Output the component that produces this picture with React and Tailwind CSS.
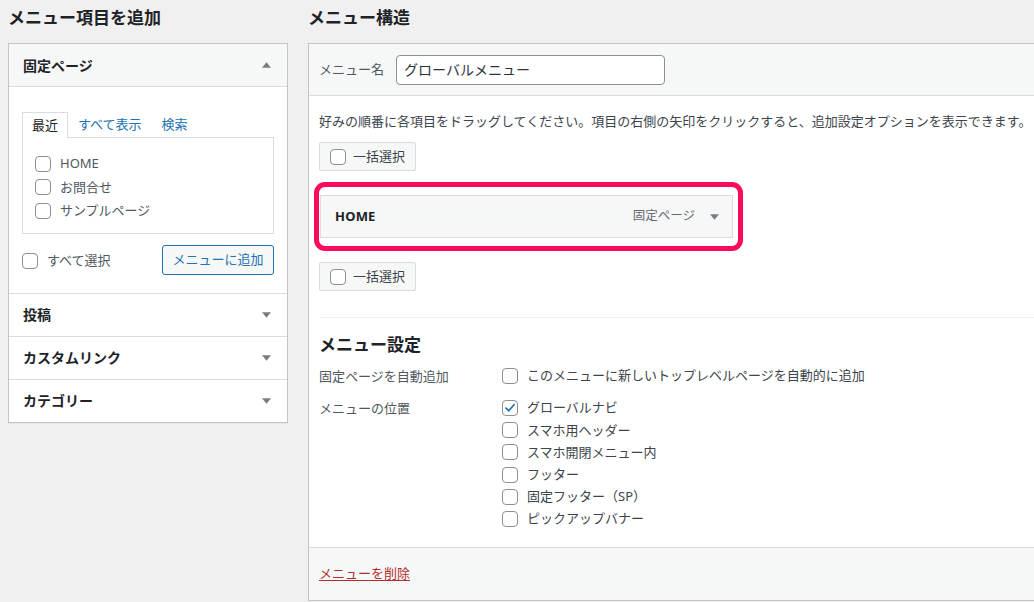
import React from 'react';

const Checkbox = ({ checked = false }) => (
  <span className="w-4 h-4 shrink-0 border border-[#8c8f94] rounded-[4px] bg-white flex items-center justify-center">
    {checked && (
      <svg viewBox="0 0 16 16" className="w-[14px] h-[14px]">
        <path d="M3.5 8.2 L6.6 11.2 L12.6 4.3" fill="none" stroke="#2271b1" strokeWidth="2" strokeLinecap="round" strokeLinejoin="round" />
      </svg>
    )}
  </span>
);

const Arrow = ({ up = false }) => (
  <svg viewBox="0 0 10 6" className="w-[9px] h-[6px]">
    {up ? <path d="M0 6 L5 0 L10 6 Z" fill="#787c82" /> : <path d="M0 0 L10 0 L5 6 Z" fill="#787c82" />}
  </svg>
);

const BulkSelect = ({ className }) => (
  <div className={`w-[97px] h-[29px] flex items-center gap-[7px] pl-[10px] bg-[#f6f7f7] border border-[#dcdcde] rounded-[2px] ${className}`}>
    <Checkbox />
    <span className="text-[13px] text-[#3c434a] leading-none">一括選択</span>
  </div>
);

const AccordionRow = ({ label }) => (
  <div className="h-[43px] border-t border-[#dcdcde] flex items-center justify-between pl-[14px] pr-[16px]">
    <span className="text-[14px] font-bold text-[#1d2327]">{label}</span>
    <Arrow />
  </div>
);

const pages = ['HOME', 'お問合せ', 'サンプルページ'];
const locations = [
  { label: 'グローバルナビ', checked: true },
  { label: 'スマホ用ヘッダー' },
  { label: 'スマホ開閉メニュー内' },
  { label: 'フッター' },
  { label: '固定フッター（SP）' },
  { label: 'ピックアップバナー' },
];

export default function App() {
  return (
    <div className="w-full h-[602px] overflow-hidden bg-[#f0f0f1] flex gap-[20px] pl-[8px] font-['Noto_Sans','Noto_Sans_CJK_JP',sans-serif] text-[#3c434a]">
      {/* left column */}
      <div className="w-[280px] shrink-0 pt-[6px]">
        <h2 className="text-[17px] leading-[23px] font-bold text-[#1d2327] mb-[14px]">メニュー項目を追加</h2>
        <div className="bg-white border border-[#c3c4c7] shadow-[0_1px_1px_rgba(0,0,0,0.04)]">
          <div className="h-[43px] bg-[#f6f7f7] border-b border-[#dcdcde] flex items-center justify-between pl-[14px] pr-[16px]">
            <span className="text-[14px] font-bold text-[#1d2327]">固定ページ</span>
            <Arrow up />
          </div>
          <div className="px-[13px] pt-[24px] pb-[18px]">
            <div className="flex items-end text-[13px] leading-none">
              <div className="h-[26px] px-[9px] flex items-center border border-b-0 border-[#dcdcde] bg-white text-[#1d2327] relative top-[1px]">最近</div>
              <div className="h-[26px] px-[10px] flex items-center text-[#2271b1]">すべて表示</div>
              <div className="h-[26px] px-[10px] flex items-center text-[#2271b1]">検索</div>
            </div>
            <div className="border border-[#dcdcde] pt-[14px] pb-[10px] pl-[12px]">
              {pages.map((p) => (
                <div key={p} className="h-[23.5px] flex items-center gap-[9px]">
                  <Checkbox />
                  <span className="text-[13px] text-[#50575e]">{p}</span>
                </div>
              ))}
            </div>
            <div className="mt-[11px] flex items-center justify-between">
              <div className="flex items-center gap-[9px] pt-[3px]">
                <Checkbox />
                <span className="text-[13px] text-[#50575e]">すべて選択</span>
              </div>
              <div className="w-[112px] h-[30px] border border-[#2271b1] rounded-[3px] bg-[#f6f7f7] text-[#2271b1] text-[13px] flex items-center justify-center">
                メニューに追加
              </div>
            </div>
          </div>
          <AccordionRow label="投稿" />
          <AccordionRow label="カスタムリンク" />
          <AccordionRow label="カテゴリー" />
        </div>
      </div>

      {/* right column */}
      <div className="w-[740px] shrink-0 pt-[6px]">
        <h2 className="text-[17px] leading-[23px] font-bold text-[#1d2327] mb-[14px]">メニュー構造</h2>
        <div className="bg-white border border-[#c3c4c7] h-[558px] flex flex-col">
          <div className="h-[52px] bg-[#f6f7f7] border-b border-[#dcdcde] flex items-center pl-[10px] gap-[12px]">
            <span className="text-[13px] text-[#50575e]">メニュー名</span>
            <div className="w-[269px] h-[30px] border border-[#8c8f94] rounded-[4px] bg-white flex items-center px-[7px] text-[14px] text-[#2c3338]">
              グローバルメニュー
            </div>
          </div>
          <div className="flex-1 px-[10px] pt-[16px]">
            <p className="text-[13px] leading-[18px] text-[#3c434a] whitespace-nowrap">
              好みの順番に各項目をドラッグしてください。項目の右側の矢印をクリックすると、追加設定オプションを表示できます。
            </p>
            <BulkSelect className="mt-[12px]" />
            <div className="relative mt-[24px] ml-[1px] w-[413px]">
              <div className="h-[43px] bg-[#f6f7f7] border border-[#dcdcde] flex items-center justify-between pl-[14px] pr-[13px]">
                <span className="text-[13px] font-bold text-[#1d2327] tracking-[0.2px]">HOME</span>
                <div className="flex items-center gap-[15px]">
                  <span className="text-[12.5px] text-[#646970]">固定ページ</span>
                  <Arrow />
                </div>
              </div>
              <div className="absolute left-[-6px] top-[-13px] right-[-10px] bottom-[-13px] border-[5px] border-[#fc0a5c] rounded-[11px] pointer-events-none" />
            </div>
            <BulkSelect className="mt-[24px]" />
            <div className="mt-[26px] border-t border-[#f0f0f1]" />
            <h3 className="mt-[15px] text-[17px] leading-[23px] font-bold text-[#1d2327]">メニュー設定</h3>
            <div className="mt-[9px] flex">
              <div className="w-[183px] text-[13px] leading-[22px] text-[#50575e]">固定ページを自動追加</div>
              <div className="h-[22px] flex items-center gap-[9px]">
                <Checkbox />
                <span className="text-[13px] text-[#3c434a]">このメニューに新しいトップレベルページを自動的に追加</span>
              </div>
            </div>
            <div className="mt-[10px] flex">
              <div className="w-[183px] text-[13px] leading-[22px] text-[#50575e]">メニューの位置</div>
              <div className="flex flex-col">
                {locations.map((l) => (
                  <div key={l.label} className="h-[22.2px] flex items-center gap-[9px]">
                    <Checkbox checked={l.checked} />
                    <span className="text-[13px] text-[#3c434a]">{l.label}</span>
                  </div>
                ))}
              </div>
            </div>
          </div>
          <div className="h-[53px] bg-[#f6f7f7] border-t border-[#dcdcde] flex items-center pl-[10px]">
            <span className="text-[13px] text-[#b32d2e] underline underline-offset-2">メニューを削除</span>
          </div>
        </div>
      </div>
    </div>
  );
}
